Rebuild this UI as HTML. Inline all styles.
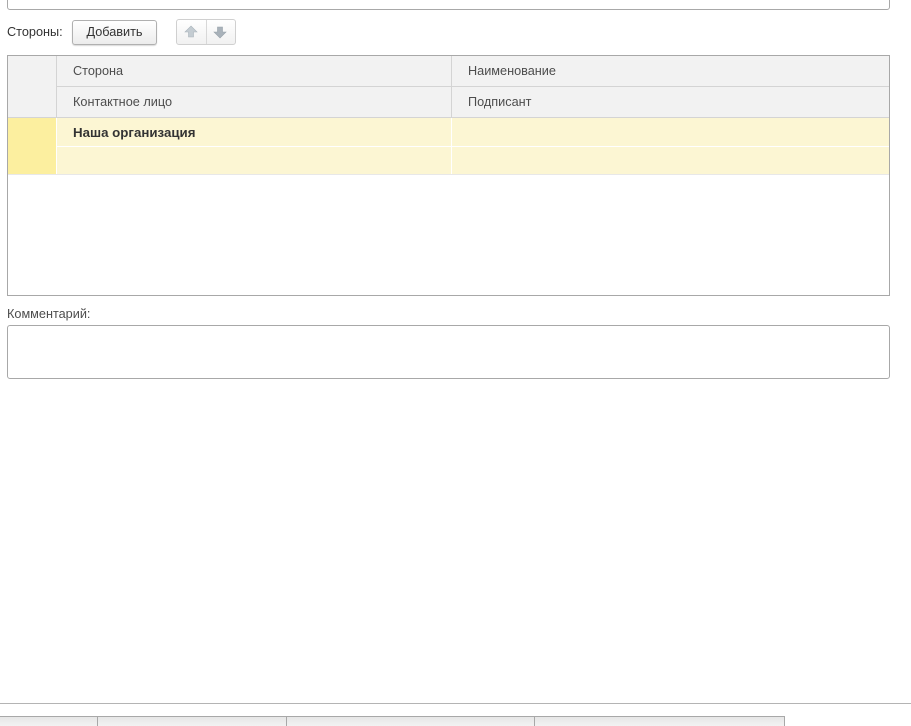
<!DOCTYPE html>
<html><head><meta charset="utf-8"><style>
*{box-sizing:border-box;margin:0;padding:0}
body{width:911px;height:726px;background:#fff;position:relative;overflow:hidden;font-family:"Liberation Sans",Arial,sans-serif;font-size:12.7px;color:#4d4d4d}
.abs{position:absolute}
</style></head><body>
<div class="abs" style="left:7px;top:-10px;width:883px;height:20px;border:1px solid #a8a8a8;border-radius:3px"></div>
<div class="abs" style="left:7px;top:25px;color:#333">Стороны:</div>
<div class="abs" style="left:72px;top:20px;width:85px;height:25px;border:1px solid #b0b0b0;border-radius:3px;background:linear-gradient(#fff,#ececec);text-align:center;line-height:23px;color:#333;box-shadow:0 1px 1px rgba(0,0,0,.15)">Добавить</div>
<div class="abs" style="left:176px;top:19px;width:60px;height:26px;border:1px solid #d0d0d0;border-radius:3px;background:linear-gradient(#fff,#f1f1f1)">
 <div class="abs" style="left:29px;top:0;width:1px;height:24px;background:#d8d8d8"></div>
 <svg class="abs" style="left:7px;top:5px" width="14" height="14" viewBox="0 0 14 14"><path d="M7 1L13 7H9.5V12H4.5V7H1Z" fill="#c4ccd2" stroke="#aab4bb" stroke-width=".6"/></svg>
 <svg class="abs" style="left:36px;top:5px" width="14" height="14" viewBox="0 0 14 14"><path d="M7 13L13 7H9.5V2H4.5V7H1Z" fill="#a9b2ba" stroke="#98a2aa" stroke-width=".6"/></svg>
</div>
<div class="abs" style="left:7px;top:55px;width:883px;height:241px;border:1px solid #a8a8a8;background:#fff">
 <div class="abs" style="left:0;top:0;width:881px;height:62px;background:#f2f2f2"></div>
 <div class="abs" style="left:48px;top:30px;width:833px;height:1px;background:#d4d4d4"></div>
 <div class="abs" style="left:0;top:61px;width:881px;height:1px;background:#d4d4d4"></div>
 <div class="abs" style="left:48px;top:0;width:1px;height:118px;background:#d4d4d4"></div>
 <div class="abs" style="left:443px;top:0;width:1px;height:118px;background:#d4d4d4"></div>
 <div class="abs" style="left:65px;top:8px">Сторона</div>
 <div class="abs" style="left:460px;top:8px">Наименование</div>
 <div class="abs" style="left:65px;top:39px">Контактное лицо</div>
 <div class="abs" style="left:460px;top:39px">Подписант</div>
 <div class="abs" style="left:0;top:62px;width:48px;height:56px;background:#fcef9f"></div>
 <div class="abs" style="left:49px;top:62px;width:394px;height:56px;background:#fcf6d3"></div>
 <div class="abs" style="left:444px;top:62px;width:437px;height:56px;background:#fcf6d3"></div>
 <div class="abs" style="left:49px;top:90px;width:832px;height:1px;background:#fff"></div>
 <div class="abs" style="left:48px;top:62px;width:1px;height:56px;background:#fff"></div>
 <div class="abs" style="left:443px;top:62px;width:1px;height:56px;background:#fff"></div>
 <div class="abs" style="left:0;top:118px;width:881px;height:1px;background:#e8e8e8"></div>
 <div class="abs" style="left:65px;top:69px;font-weight:bold;color:#333;font-size:13.3px">Наша организация</div>
</div>
<div class="abs" style="left:7px;top:307px">Комментарий:</div>
<div class="abs" style="left:7px;top:325px;width:883px;height:54px;border:1px solid #a8a8a8;border-radius:3px"></div>
<div class="abs" style="left:0;top:703px;width:911px;height:1px;background:#b4b4b4"></div>
<div class="abs" style="left:0;top:716px;width:911px;height:10px;background:linear-gradient(#e6e6e6,#f2f2f2);border-top:1px solid #a8a8a8"></div>
<div class="abs" style="left:97px;top:716px;width:1px;height:10px;background:#a8a8a8"></div>
<div class="abs" style="left:286px;top:716px;width:1px;height:10px;background:#a8a8a8"></div>
<div class="abs" style="left:534px;top:716px;width:1px;height:10px;background:#a8a8a8"></div>
<div class="abs" style="left:784px;top:716px;width:127px;height:10px;background:#fff;border-left:1px solid #a8a8a8"></div>
</body></html>
